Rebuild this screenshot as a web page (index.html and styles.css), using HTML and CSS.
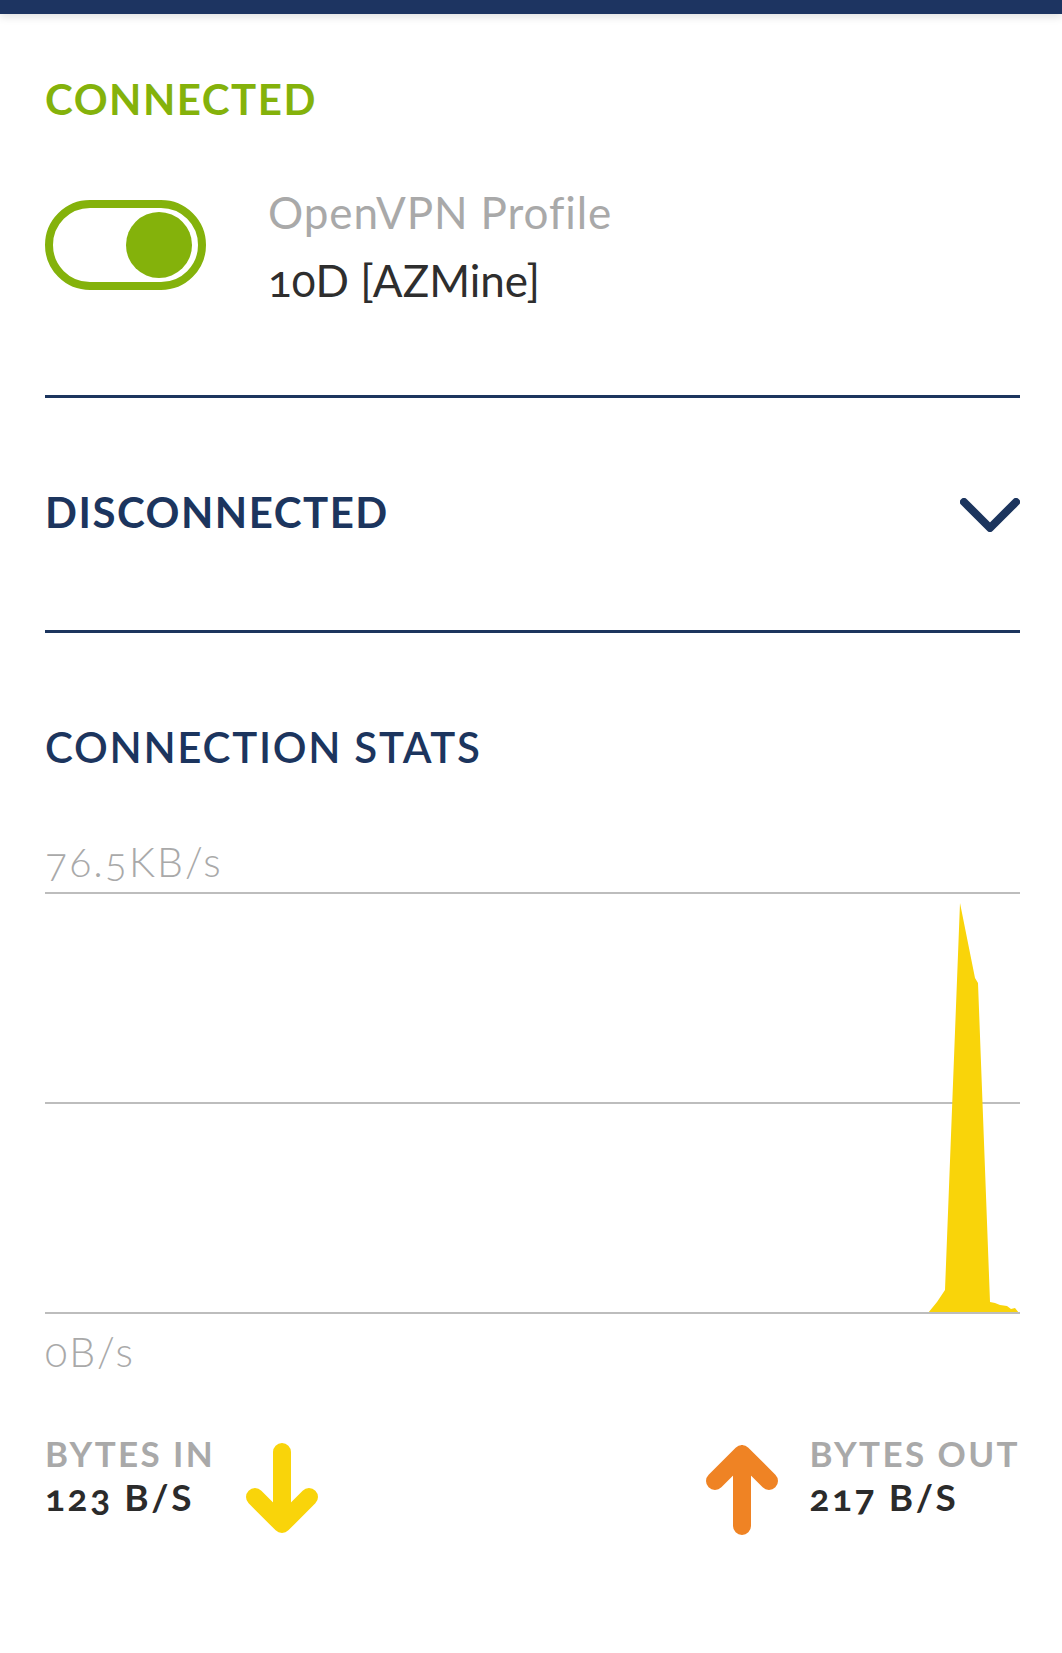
FILE: index.html
```html
<!DOCTYPE html>
<html lang="en">
<head>
    <meta charset="UTF-8">
    <meta name="viewport" content="width=device-width, initial-scale=1.0">
    <title>VPN Connection</title>
    <link rel="stylesheet" href="styles.css">
</head>
<body>
    <div class="topbar"></div>
    <main class="panel">
        <section class="status">
            <h2 class="status-title">CONNECTED</h2>
            <div class="profile-row">
                <div class="toggle on"><span class="knob"></span></div>
                <div class="profile-info">
                    <div class="profile-type">OpenVPN Profile</div>
                    <div class="profile-name">10D [AZMine]</div>
                </div>
            </div>
        </section>

        <section class="group-row">
            <h2 class="group-title">DISCONNECTED</h2>
            <svg class="chevron" width="60" height="34" viewBox="0 0 60 34">
                <polyline points="4,4 30,30 56,4" fill="none" stroke="#1c355e" stroke-width="8" stroke-linecap="round" stroke-linejoin="round"/>
            </svg>
        </section>

        <section class="stats">
            <h2 class="stats-title">CONNECTION STATS</h2>
            <div class="axis-label">76.5KB/s</div>
            <svg class="chart" width="975" height="423" viewBox="0 0 975 423" preserveAspectRatio="none">
                <line x1="0" y1="1" x2="975" y2="1" stroke="#bdbdbd" stroke-width="2"/>
                <line x1="0" y1="211" x2="975" y2="211" stroke="#bdbdbd" stroke-width="2"/>
                <path d="M883,421 L892,410 L900,398 L915,11 L930,86 L933,91 L945,410 L950,411 L955,413 L962,414 L966,417 L970,416 L974,421 Z" fill="#f9d40a"/>
                <line x1="0" y1="421" x2="975" y2="421" stroke="#bdbdbd" stroke-width="2"/>
            </svg>
            <div class="axis-label">0B/s</div>

            <div class="bytes-row">
                <div class="bytes-item">
                    <div class="bytes-text">
                        <div class="bytes-label">BYTES IN</div>
                        <div class="bytes-value">123 B/S</div>
                    </div>
                    <svg class="arrow" width="72" height="92" viewBox="0 0 72 92">
                        <path d="M36,9 L36,81 M9,54 L36,81 L63,54" fill="none" stroke="#f9d40a" stroke-width="18" stroke-linecap="round" stroke-linejoin="round"/>
                    </svg>
                </div>
                <div class="bytes-item">
                    <svg class="arrow" width="72" height="92" viewBox="0 0 72 92">
                        <path d="M36,83 L36,11 M9,38 L36,11 L63,38" fill="none" stroke="#ef8324" stroke-width="18" stroke-linecap="round" stroke-linejoin="round"/>
                    </svg>
                    <div class="bytes-text">
                        <div class="bytes-label">BYTES OUT</div>
                        <div class="bytes-value">217 B/S</div>
                    </div>
                </div>
            </div>
        </section>
    </main>
</body>
</html>
```

FILE: styles.css
```css
body {
    margin: 0;
    background-color: #ffffff;
    font-family: 'Lato', 'Open Sans', sans-serif;
}

.topbar {
    height: 14px;
    background-color: #1d3461;
    box-shadow: 0 3px 8px rgba(0, 0, 0, 0.12);
}

.panel {
    padding: 0 42px 0 45px;
}

h2 {
    margin: 0;
    font-size: 42px;
    line-height: 42px;
    font-weight: 700;
    letter-spacing: 1.5px;
}

.status-title {
    margin-top: 64px;
    color: #84b20b;
}

.profile-row {
    display: flex;
    align-items: flex-start;
    gap: 62px;
    margin-top: 57px;
    padding-bottom: 81px;
    border-bottom: 3px solid #1c355e;
}

.toggle {
    box-sizing: border-box;
    width: 161px;
    height: 90px;
    margin-top: 23px;
    border: 8px solid #84b20b;
    border-radius: 45px;
    display: flex;
    align-items: center;
    justify-content: flex-end;
    padding-right: 6px;
}

.knob {
    width: 66px;
    height: 66px;
    border-radius: 50%;
    background-color: #84b20b;
}

.profile-info {
    margin-top: 1px;
    font-size: 44px;
    line-height: 68px;
    font-variant-numeric: oldstyle-nums;
}

.profile-type {
    color: #a9a9a9;
    letter-spacing: 0.9px;
}

.profile-name {
    color: #2e2e2e;
}

.group-row {
    display: flex;
    justify-content: space-between;
    align-items: flex-start;
    padding: 93px 0 97px;
    border-bottom: 3px solid #1c355e;
}

.group-title {
    color: #1c355e;
}

.chevron {
    margin-top: 7px;
}

.stats-title {
    margin-top: 93px;
    color: #1c355e;
    font-weight: 600;
    letter-spacing: 1.7px;
}

.axis-label {
    font-size: 41px;
    line-height: 38px;
    font-weight: 300;
    letter-spacing: 2px;
    color: #a9a9a9;
    font-variant-numeric: oldstyle-nums;
}

.stats-title + .axis-label {
    margin-top: 75px;
    margin-bottom: 11px;
}

.chart {
    display: block;
    margin-bottom: 18px;
}

.bytes-row {
    display: flex;
    justify-content: space-between;
    margin-top: 60px;
}

.bytes-item {
    display: flex;
    align-items: flex-start;
    gap: 31px;
}

.bytes-text {
    line-height: 44px;
    font-weight: 700;
}

.bytes-label {
    font-size: 35px;
    letter-spacing: 2.4px;
    color: #a9a9a9;
}

.bytes-value {
    font-size: 37px;
    letter-spacing: 2.6px;
    color: #2b2b2b;
    font-variant-numeric: oldstyle-nums;
}

.arrow {
    display: block;
    margin-top: 12px;
}
```
